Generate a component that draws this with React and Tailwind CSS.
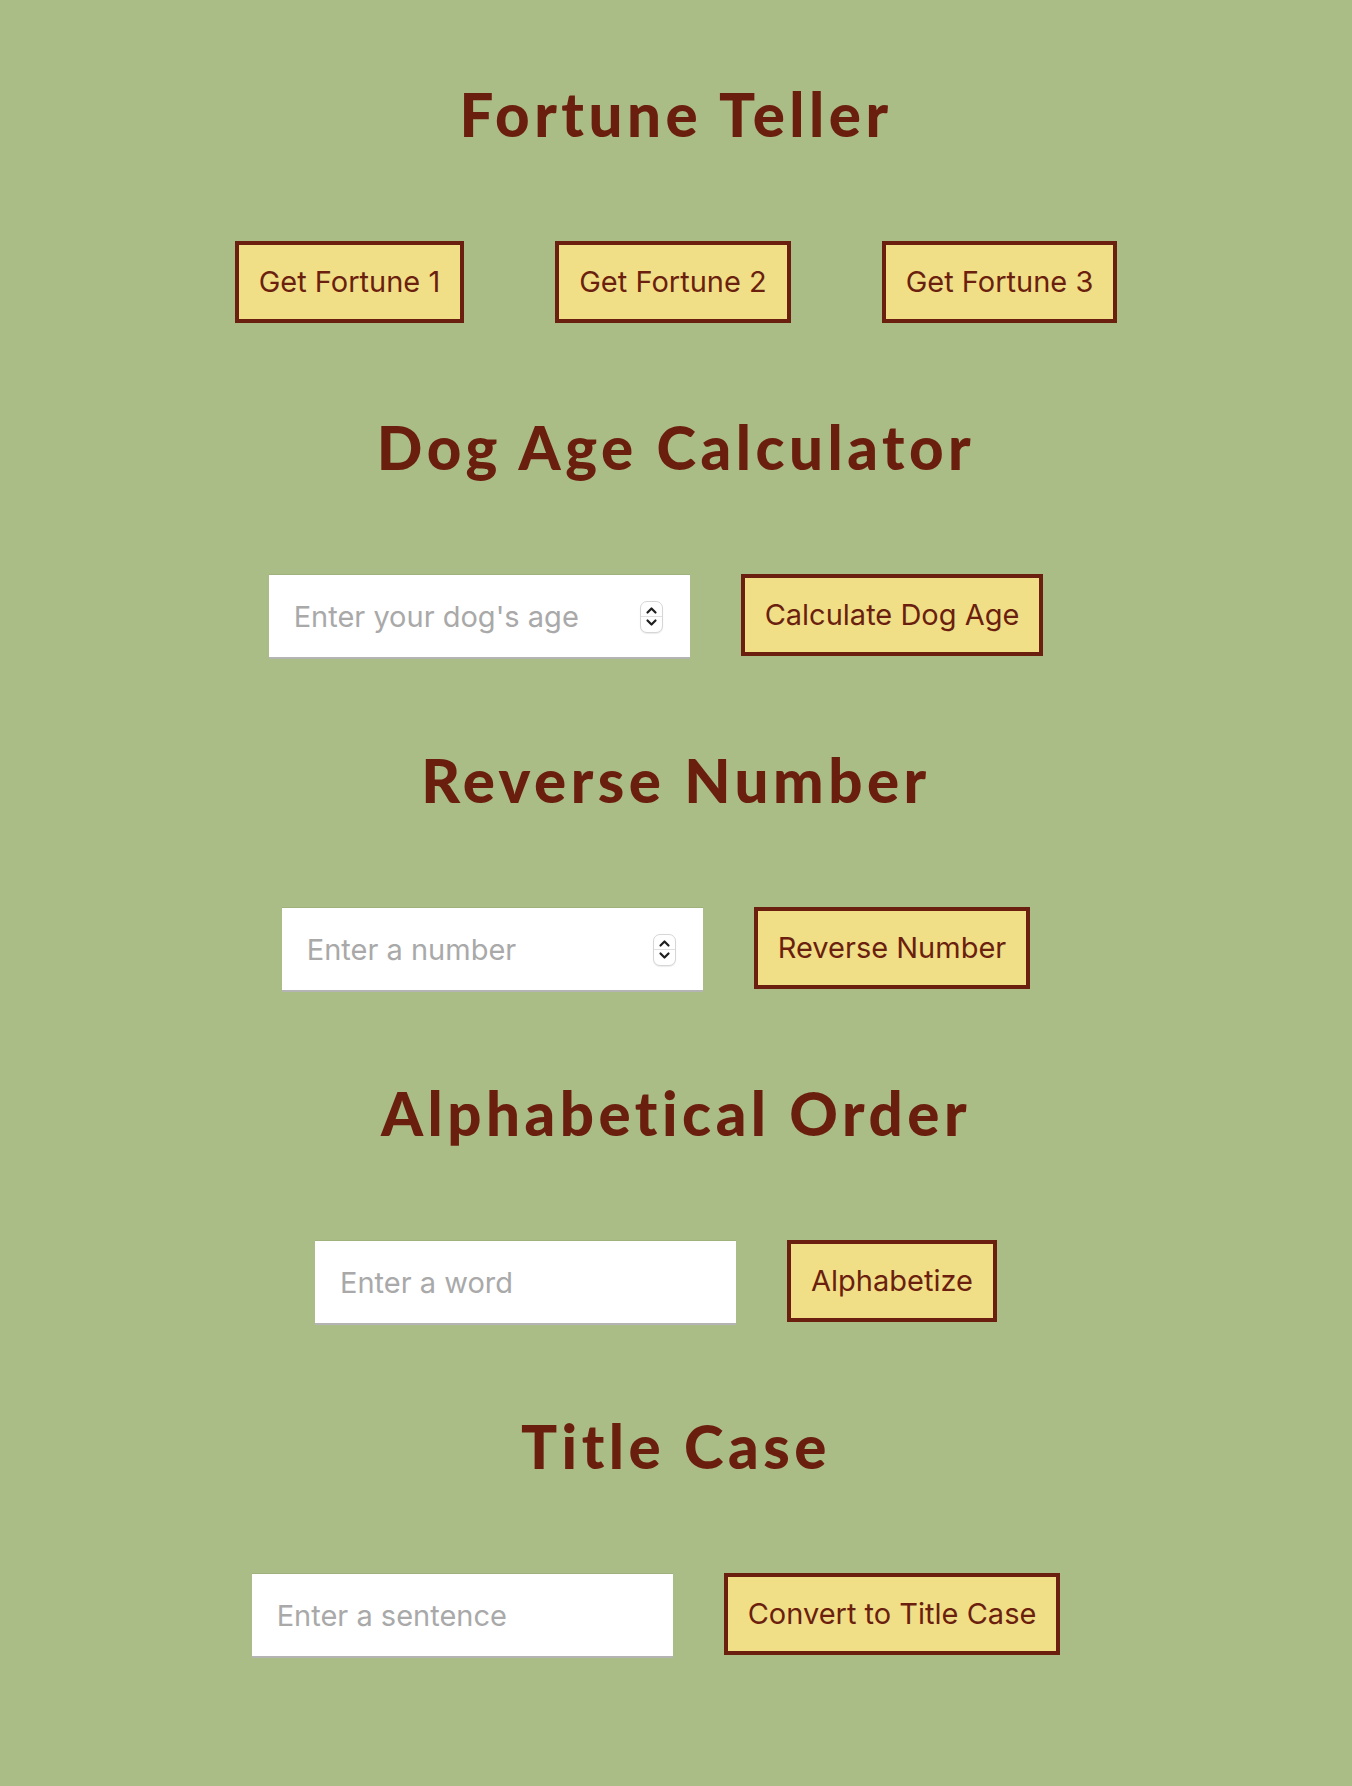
import React from 'react';

const sections = [
  { title: 'Fortune Teller', buttons: ['Get Fortune 1', 'Get Fortune 2', 'Get Fortune 3'] },
  { title: 'Dog Age Calculator', input: "Enter your dog's age", number: true, button: 'Calculate Dog Age' },
  { title: 'Reverse Number', input: 'Enter a number', number: true, button: 'Reverse Number' },
  { title: 'Alphabetical Order', input: 'Enter a word', button: 'Alphabetize' },
  { title: 'Title Case', input: 'Enter a sentence', button: 'Convert to Title Case' },
];

const Spinner = () => (
  <span className="absolute right-[27px] top-1/2 -translate-y-1/2 w-[23px] h-[32px] rounded-[7px] border border-[#d6d6d6] bg-white flex flex-col items-center justify-center shadow-[0_1px_1px_rgba(0,0,0,0.08)]">
    <svg width="13" height="9" viewBox="0 0 13 9" className="mb-[1px]">
      <path d="M2.5 6.5 L6.5 2.5 L10.5 6.5" fill="none" stroke="#1e1e1e" strokeWidth="2.2" strokeLinecap="round" strokeLinejoin="round" />
    </svg>
    <span className="w-full h-px bg-[#e0e0e0]" />
    <svg width="13" height="9" viewBox="0 0 13 9" className="mt-[1px]">
      <path d="M2.5 2.5 L6.5 6.5 L10.5 2.5" fill="none" stroke="#1e1e1e" strokeWidth="2.2" strokeLinecap="round" strokeLinejoin="round" />
    </svg>
  </span>
);

const Button = ({ children }) => (
  <button
    type="button"
    className="mx-[40px] px-[20px] py-[20px] border-[4px] border-[#6b1f0e] bg-[#f0df87] text-[#6b1f0e] text-[29px] leading-[34px] font-['Inter',sans-serif] whitespace-nowrap"
  >
    {children}
  </button>
);

export default function App() {
  return (
    <div className="min-h-[1786px] bg-[#abbd87] pt-[79px]">
      {sections.map((s) => (
        <section key={s.title} className="h-[333px] flex flex-col items-center">
          <h1 className="text-[60px] leading-[70px] tracking-[4.5px] font-black text-[#6a1e0e] font-['Lato',sans-serif]">
            {s.title}
          </h1>
          <div className="mt-[92px] flex justify-center items-start gap-[11px]">
            {s.buttons
              ? s.buttons.map((b) => <Button key={b}>{b}</Button>)
              : (
                <>
                  <div className="relative">
                    <input
                      type="text"
                      placeholder={s.input}
                      className="w-[421px] h-[85px] pl-[25px] bg-white text-[29px] font-['Inter',sans-serif] placeholder:text-[#a9a9a9] outline-none border-t border-t-[#9fb27c] border-b-2 border-b-[#b4b4b4]"
                    />
                    {s.number && <Spinner />}
                  </div>
                  <Button>{s.button}</Button>
                </>
              )}
          </div>
        </section>
      ))}
    </div>
  );
}
